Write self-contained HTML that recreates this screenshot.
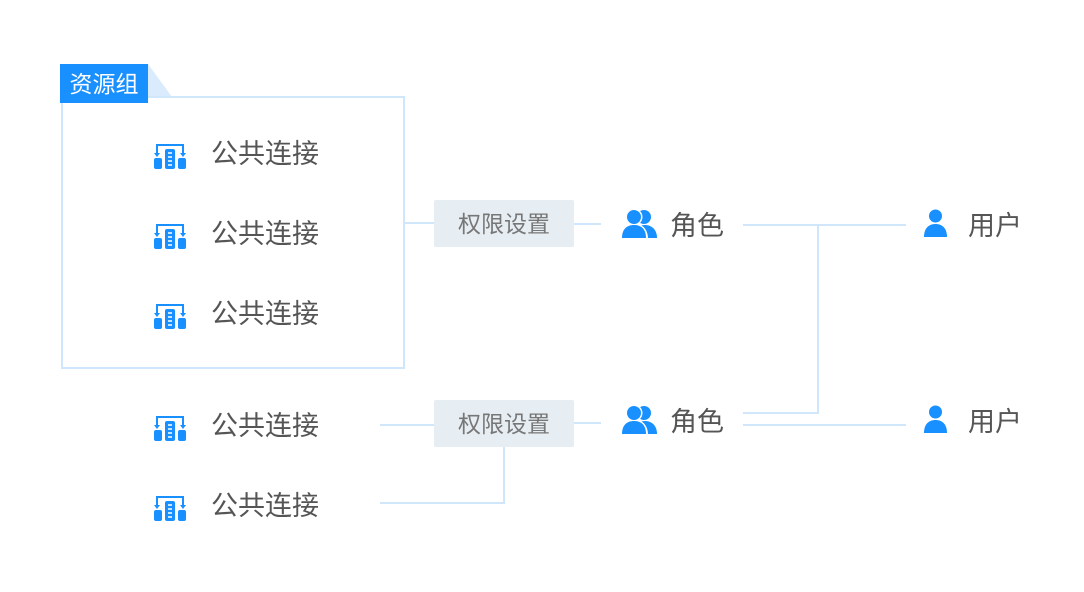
<!DOCTYPE html>
<html><head><meta charset="utf-8"><style>
body{margin:0;width:1084px;height:592px;background:#fff;position:relative;overflow:hidden;font-family:"Liberation Sans","Noto Sans CJK SC",sans-serif}
.a{position:absolute}
.t{position:absolute;font-size:27px;color:#555;line-height:30px}
.ln{position:absolute;background:#cfe6fb}
.perm{position:absolute;width:140px;height:47px;background:#e6edf3;border-radius:2px;color:#777;font-size:23px;line-height:49px;text-align:center}
</style></head><body>
<svg width="0" height="0" style="position:absolute"><defs>
<g id="db"><path d="M3 13V3H29V12" fill="none" stroke="#1890ff" stroke-width="2"/><path d="M0 11h6l-3 4z M26 11h6l-3 4z" fill="#1890ff"/><rect x="0" y="16" width="8" height="11" rx="2" fill="#1890ff"/><rect x="24" y="16" width="8" height="11" rx="2" fill="#1890ff"/><rect x="11" y="7" width="10" height="20" rx="2" fill="#1890ff"/><path d="M14 11h4M14 15h4M14 19h4M14 23h4" stroke="#fff" stroke-width="1.5"/></g>
<g id="grp"><circle cx="22" cy="8" r="7" fill="#1890ff"/><path d="M12 29c0-9 5-13 11-13s12 4 12 13z" fill="#1890ff"/><circle cx="12" cy="8" r="8.5" fill="#fff"/><path d="M-2 30c0-10 6-15.5 14-15.5s14 5.5 14 15.5z" fill="#fff"/><circle cx="12" cy="8" r="7" fill="#1890ff"/><path d="M0 29c0-9 5-13 12-13s12 4 12 13z" fill="#1890ff"/></g>
<g id="usr"><circle cx="11.5" cy="7" r="6.5" fill="#1890ff"/><path d="M0 28c0-9 5-13 11.5-13S23 19 23 28z" fill="#1890ff"/></g>
</defs></svg>
<div class="a" style="left:60px;top:64px;width:88px;height:39px;background:#1890ff;color:#fff;font-size:23px;line-height:40px;text-align:center;z-index:2">资源组</div>
<svg class="a" style="left:148px;top:64px" width="26" height="34"><path d="M0 0L24 33H0z" fill="#d9ebfc"/></svg>
<div class="a" style="left:61px;top:96px;width:340px;height:269px;border:2px solid #cfe6fb"></div>
<svg class="a" style="left:154px;top:142px" width="33" height="28"><use href="#db"/></svg>
<svg class="a" style="left:154px;top:222px" width="33" height="28"><use href="#db"/></svg>
<svg class="a" style="left:154px;top:302px" width="33" height="28"><use href="#db"/></svg>
<svg class="a" style="left:154px;top:414px" width="33" height="28"><use href="#db"/></svg>
<svg class="a" style="left:154px;top:494px" width="33" height="28"><use href="#db"/></svg>
<div class="t" style="left:211px;top:139px">公共连接</div>
<div class="t" style="left:211px;top:219px">公共连接</div>
<div class="t" style="left:211px;top:299px">公共连接</div>
<div class="t" style="left:211px;top:411px">公共连接</div>
<div class="t" style="left:211px;top:491px">公共连接</div>
<div class="ln" style="left:403px;top:222px;width:31px;height:2px"></div>
<div class="ln" style="left:574px;top:223px;width:27px;height:2px"></div>
<div class="ln" style="left:380px;top:424px;width:54px;height:2px"></div>
<div class="ln" style="left:574px;top:422px;width:27px;height:2px"></div>
<div class="ln" style="left:503px;top:447px;width:2px;height:57px"></div>
<div class="ln" style="left:380px;top:502px;width:125px;height:2px"></div>
<div class="perm" style="left:434px;top:200px">权限设置</div>
<div class="perm" style="left:434px;top:400px">权限设置</div>
<svg class="a" style="left:622px;top:209px" width="36" height="30"><use href="#grp"/></svg>
<svg class="a" style="left:622px;top:405px" width="36" height="30"><use href="#grp"/></svg>
<div class="t" style="left:670px;top:211px">角色</div>
<div class="t" style="left:670px;top:407px">角色</div>
<div class="ln" style="left:743px;top:224px;width:163px;height:2px"></div>
<div class="ln" style="left:817px;top:224px;width:2px;height:190px"></div>
<div class="ln" style="left:743px;top:412px;width:76px;height:2px"></div>
<div class="ln" style="left:743px;top:424px;width:163px;height:2px"></div>
<svg class="a" style="left:924px;top:209px" width="24" height="29"><use href="#usr"/></svg>
<svg class="a" style="left:924px;top:405px" width="24" height="29"><use href="#usr"/></svg>
<div class="t" style="left:968px;top:211px">用户</div>
<div class="t" style="left:968px;top:407px">用户</div>
</body></html>
